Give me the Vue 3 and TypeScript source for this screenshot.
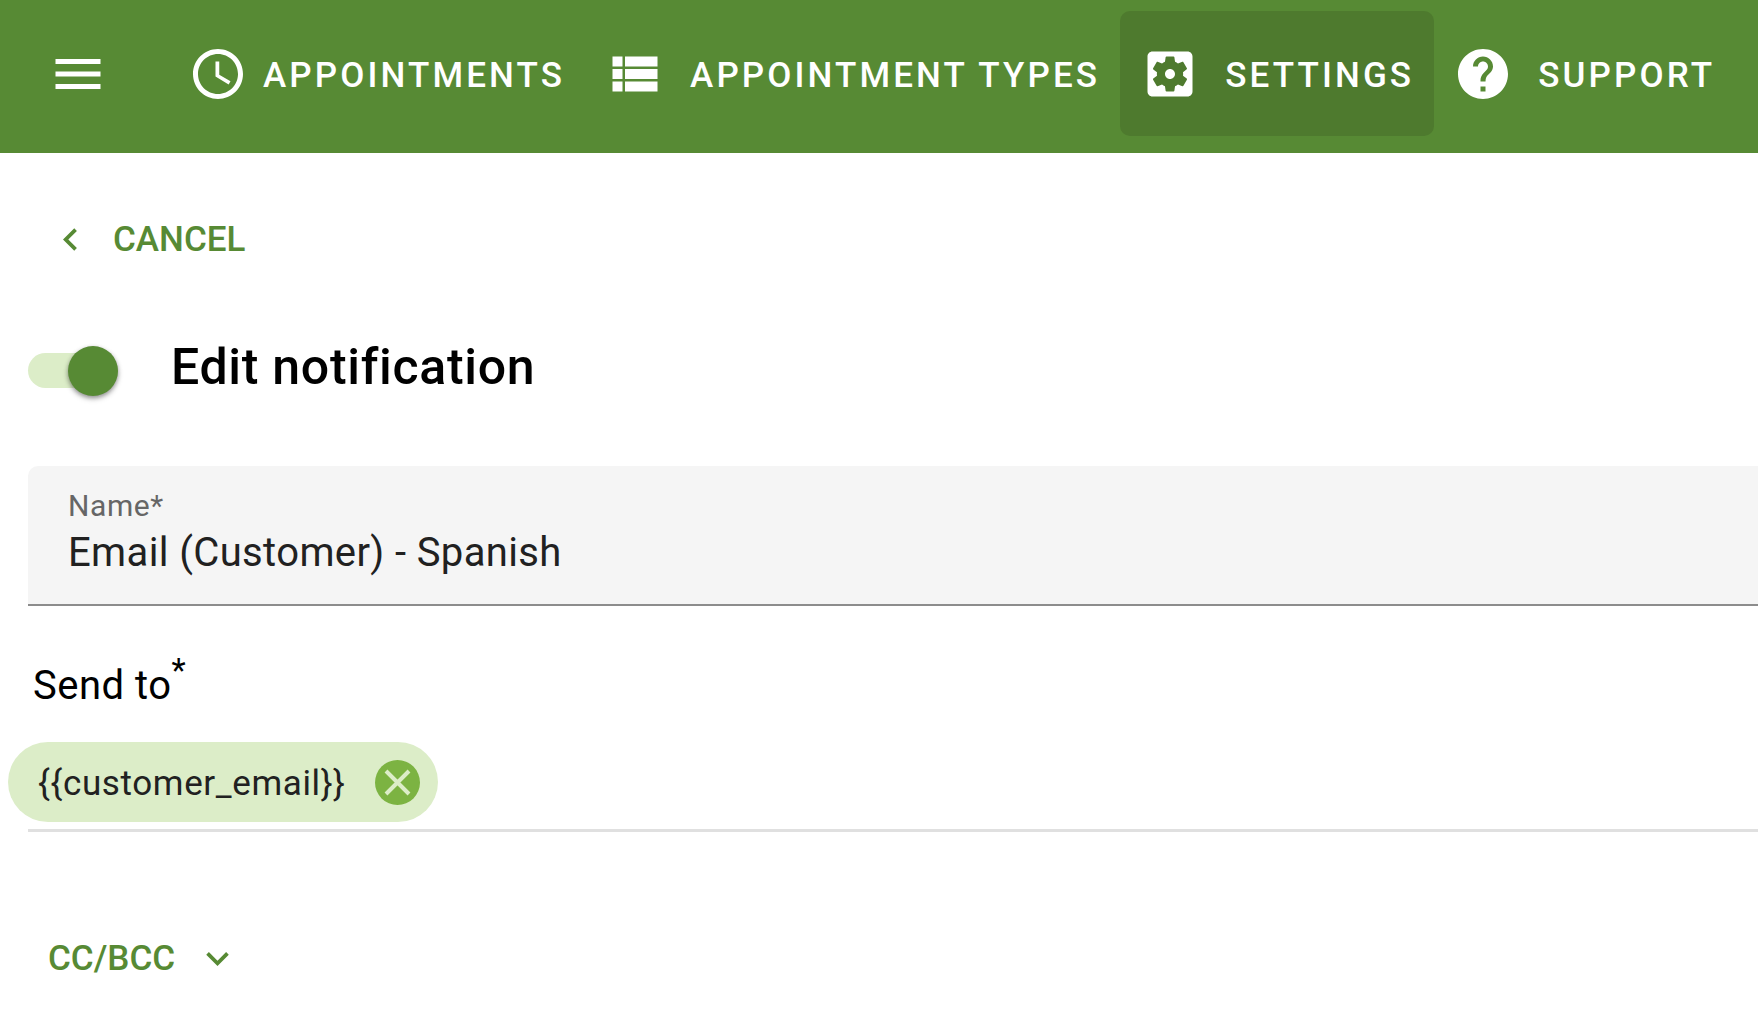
<template>
    <div class="page">
        <!-- Top bar -->
        <header class="topbar">
            <button class="menu-btn" type="button">
                <svg class="icon-60" viewBox="0 0 24 24"><path :d="icons.menu" /></svg>
            </button>
            <nav class="tabs">
                <a v-for="tab in tabs" :key="tab.label" class="tab" :class="{ active: tab.active, tight: tab.tight }">
                    <svg class="icon-60" viewBox="0 0 24 24"><path :d="tab.icon" /></svg>
                    <span>{{ tab.label }}</span>
                </a>
            </nav>
        </header>

        <main class="content">
            <button class="text-btn cancel" type="button">
                <svg class="icon-45" viewBox="0 0 24 24"><path :d="icons.chevronLeft" /></svg>
                <span>CANCEL</span>
            </button>

            <div class="title-row">
                <div class="switch">
                    <div class="switch-track"></div>
                    <div class="switch-thumb"></div>
                </div>
                <h1>Edit notification</h1>
            </div>

            <div class="text-field">
                <div class="field-label">Name*</div>
                <div class="field-value">Email (Customer) - Spanish</div>
            </div>

            <div class="send-label">Send to<sup>*</sup></div>

            <div class="chip-field">
                <div class="chip">
                    <span>{{ chipText }}</span>
                    <svg class="chip-close" viewBox="0 0 45 45">
                        <circle cx="22.5" cy="22.5" r="22.5" />
                        <path d="M11 11L34 34M34 11L11 34" />
                    </svg>
                </div>
            </div>

            <button class="text-btn cc" type="button">
                <span>CC/BCC</span>
                <svg class="icon-45" viewBox="0 0 24 24"><path :d="icons.expandMore" /></svg>
            </button>
        </main>
    </div>
</template>

<script setup lang="ts">
interface Tab {
    label: string,
    icon: string,
    active?: boolean,
    tight?: boolean,
}

// Material icon paths
const icons = {
    menu: 'M3 18h18v-2H3v2zm0-5h18v-2H3v2zm0-7v2h18V6H3z',
    chevronLeft: 'M15.41 7.41L14 6l-6 6 6 6 1.41-1.41L10.83 12z',
    expandMore: 'M16.59 8.59L12 13.17 7.41 8.59 6 10l6 6 6-6z',
    clock: 'M11.99 2C6.47 2 2 6.48 2 12s4.47 10 9.99 10C17.52 22 22 17.52 22 12S17.52 2 11.99 2zM12 20c-4.42 0-8-3.58-8-8s3.58-8 8-8 8 3.58 8 8-3.58 8-8 8zm.5-13H11v6l5.25 3.15.75-1.23-4.5-2.67z',
    list: 'M3 14h4v-4H3v4zm0 5h4v-4H3v4zM3 9h4V5H3v4zm5 5h13v-4H8v4zm0 5h13v-4H8v4zM8 5v4h13V5H8z',
    settings: 'M12 10c-1.1 0-2 .9-2 2s.9 2 2 2 2-.9 2-2-.9-2-2-2zm7-7H5c-1.11 0-2 .9-2 2v14c0 1.1.89 2 2 2h14c1.11 0 2-.9 2-2V5c0-1.1-.89-2-2-2zm-1.75 9c0 .23-.02.46-.05.68l1.48 1.16c.13.11.17.3.08.45l-1.4 2.42c-.09.15-.27.21-.43.15l-1.74-.7c-.36.28-.76.51-1.18.69l-.26 1.85c-.03.17-.18.3-.35.3h-2.8c-.17 0-.32-.13-.35-.29l-.26-1.85c-.43-.18-.82-.41-1.18-.69l-1.74.7c-.16.06-.34 0-.43-.15l-1.4-2.42c-.09-.15-.05-.34.08-.45l1.48-1.16c-.03-.23-.05-.46-.05-.69 0-.23.02-.46.05-.68l-1.48-1.16c-.13-.11-.17-.3-.08-.45l1.4-2.42c.09-.15.27-.21.43-.15l1.74.7c.36-.28.76-.51 1.18-.69l.26-1.85c.03-.17.18-.3.35-.3h2.8c.17 0 .32.13.35.29l.26 1.85c.43.18.82.41 1.18.69l1.74-.7c.16-.06.34 0 .43.15l1.4 2.42c.09.15.05.34-.08.45l-1.48 1.16c.03.23.05.46.05.69z',
    help: 'M12 2C6.48 2 2 6.48 2 12s4.48 10 10 10 10-4.48 10-10S17.52 2 12 2zm1 17h-2v-2h2v2zm2.07-7.75l-.9.92C13.45 12.9 13 13.5 13 15h-2v-.5c0-1.1.45-2.1 1.17-2.83l1.24-1.26c.37-.36.59-.86.59-1.41 0-1.1-.9-2-2-2s-2 .9-2 2H8c0-2.21 1.79-4 4-4s4 1.79 4 4c0 .88-.36 1.68-.93 2.25z',
};

const tabs: Tab[] = [
    { label: 'APPOINTMENTS', icon: icons.clock, tight: true },
    { label: 'APPOINTMENT TYPES', icon: icons.list },
    { label: 'SETTINGS', icon: icons.settings, active: true },
    { label: 'SUPPORT', icon: icons.help },
];

const chipText = '{{customer_email}}';
</script>

<style>
html, body {
    margin: 0;
    background: #fff;
    overflow: hidden;
}
</style>

<style scoped>
.page {
    width: 100%;
    font-family: Roboto, "Liberation Sans", sans-serif;
    color: #000;
}

svg path {
    fill: currentColor;
}

button {
    border: 0;
    padding: 0;
    background: none;
    font: inherit;
}

.icon-60 {
    width: 60px;
    height: 60px;
    flex: none;
    display: block;
}

.icon-45 {
    width: 45px;
    height: 45px;
    flex: none;
    display: block;
}

/* Top bar */
.topbar {
    height: 153px;
    box-sizing: border-box;
    display: flex;
    align-items: center;
    padding: 0 0 5px 48px;
    background: #578a34;
    color: #fff;
}

.menu-btn {
    color: #fff;
    margin-right: 60px;
}

.tabs {
    display: flex;
    align-items: center;
    margin-top: -2px;
}

.tab {
    display: flex;
    align-items: center;
    gap: 25px;
    height: 125px;
    box-sizing: border-box;
    padding: 2px 20px 0;
    border-radius: 10px;
    font-size: 35px;
    font-weight: 500;
    letter-spacing: 3.125px;
    white-space: nowrap;
}

.tab span {
    position: relative;
    top: 1px;
}

.tab.tight {
    gap: 15px;
}

.tab.active {
    background: #4e7a2e;
    margin-right: -1px;
}

/* Content */
.content {
    display: flex;
    flex-direction: column;
    align-items: stretch;
}

.text-btn {
    display: flex;
    align-items: center;
    align-self: flex-start;
    height: 90px;
    font-size: 35px;
    font-weight: 500;
    color: #578a34;
}

.cancel {
    margin: 41px 0 0 48px;
    gap: 20px;
}

.title-row {
    display: flex;
    align-items: flex-start;
    margin: 52px 0 0 28px;
}

.switch {
    position: relative;
    width: 90px;
    height: 50px;
    margin-top: 10px;
    flex: none;
}

.switch-track {
    position: absolute;
    left: 0;
    right: 0;
    top: 6.5px;
    height: 35px;
    border-radius: 17.5px;
    background: #dcedc8;
}

.switch-thumb {
    position: absolute;
    right: 0;
    top: 0;
    width: 50px;
    height: 50px;
    border-radius: 50%;
    background: #578a34;
    box-shadow: 0 2px 4px rgba(0, 0, 0, .35), 0 3px 6px rgba(0, 0, 0, .14);
}

h1 {
    margin: 1px 0 0 53px;
    font-size: 50px;
    line-height: 60px;
    font-weight: 500;
    letter-spacing: .7px;
}

.text-field {
    height: 140px;
    box-sizing: border-box;
    margin: 69px 0 0 28px;
    padding: 24.5px 0 0 40px;
    background: #f5f5f5;
    border-bottom: 2px solid #8c8c8c;
    border-radius: 10px 0 0 0;
}

.field-label {
    font-size: 30px;
    line-height: 30px;
    letter-spacing: .6px;
    color: #666;
}

.field-value {
    margin-top: 12.5px;
    font-size: 40px;
    line-height: 40px;
    letter-spacing: .375px;
    color: #212121;
}

.send-label {
    position: relative;
    margin: 55px 0 0 33px;
    font-size: 40px;
    line-height: 50px;
    letter-spacing: .5px;
}

sup {
    position: relative;
    top: -3px;
    font-size: 33px;
    line-height: 0;
}

.chip-field {
    display: flex;
    margin: 31px 0 0 28px;
    padding-bottom: 7px;
    border-bottom: 3px solid #e0e0e0;
}

.chip {
    display: flex;
    align-items: center;
    height: 80px;
    margin-left: -20px;
    padding: 0 18px 0 30px;
    gap: 29px;
    border-radius: 40px;
    background: #dcedc8;
    font-size: 35px;
    letter-spacing: .625px;
    color: #212121;
}

.chip span {
    position: relative;
    top: 1px;
}

.chip-close {
    width: 45px;
    height: 45px;
    flex: none;
}

.chip-close circle {
    fill: #7cb342;
}

.chip-close path {
    fill: none;
    stroke: #dcedc8;
    stroke-width: 4px;
}

.cc {
    margin: 81px 0 0 48px;
    gap: 20px;
}
</style>
